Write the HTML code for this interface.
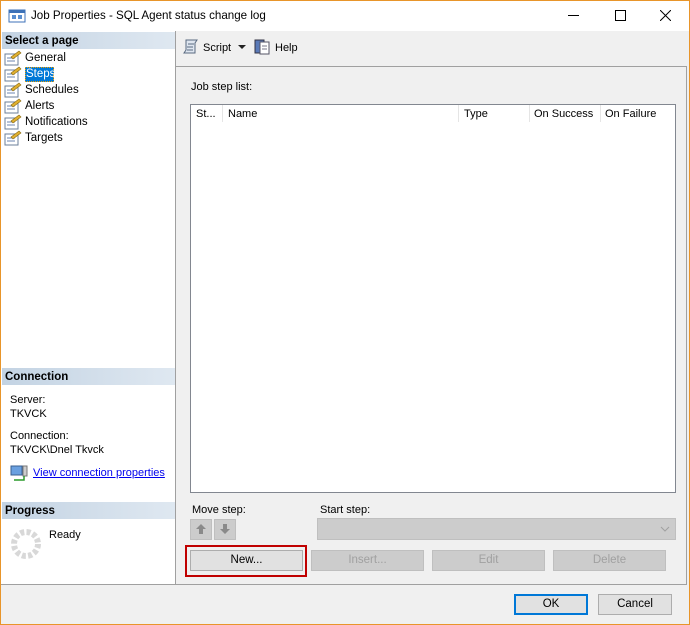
<!DOCTYPE html>
<html><head><style>
*{box-sizing:border-box;margin:0;padding:0}
body{width:690px;height:625px;overflow:hidden;font-family:"Liberation Sans",sans-serif;font-size:11px;line-height:16px;color:#000;background:#f0f0f0;position:relative}
.a{position:absolute}
.win{left:0;top:0;width:690px;height:625px;border:1px solid #e8952a}
.hdr{background:linear-gradient(to right,#c3d3e3,#dfe8f1);font-weight:bold;height:17px;padding:1px 3px;line-height:16px;font-size:11.5px}
.btn{background:#e1e1e1;border:1px solid #adadad;text-align:center;line-height:19px;height:21px;font-size:11.5px}
.dis{background:#cccccc;border:1px solid #bfbfbf;color:#a0a0a0}
.li{left:25px;font-size:11.5px}
</style></head><body>
<div class="a win"></div>
<div class="a" style="left:1px;top:1px;width:688px;height:30px;background:#fff"></div>
<svg class="a" style="left:8px;top:8px" width="18" height="16"><rect x="1" y="2" width="16" height="12" fill="#fff" stroke="#3d72b8"/><rect x="1" y="2" width="16" height="3" fill="#3d72b8"/><rect x="4" y="7" width="4" height="4" fill="#5b8fd0"/><rect x="10" y="7" width="4" height="4" fill="#5b8fd0"/></svg>
<div class="a" style="left:31px;top:8px;font-size:11.6px">Job Properties - SQL Agent status change log</div>
<div class="a" style="left:568px;top:15px;width:11px;border-top:1px solid #000"></div>
<div class="a" style="left:615px;top:10px;width:11px;height:11px;border:1px solid #000"></div>
<svg class="a" style="left:660px;top:10px" width="11" height="11"><path d="M0 0L11 11M11 0L0 11" stroke="#000" stroke-width="1"/></svg>

<div class="a" style="left:1px;top:31px;width:175px;height:554px;background:#fff;border-right:1px solid #a0a0a0;border-bottom:1px solid #a0a0a0"></div>
<div class="a hdr" style="left:2px;top:32px;width:173px">Select a page</div>
<div class="a" style="left:25px;top:67px;width:29px;height:15px;background:#0078d7;border:1px dotted #f0a000"></div>
<svg class="a" style="left:4px;top:50px" width="18" height="96">
<g id="p"><rect x="1" y="4" width="13" height="11" fill="#fff" stroke="#6b7f9a"/><path d="M3 8h8M3 11h8" stroke="#6b86b0"/><path d="M7 7l8-6 2 2-8 6z" fill="#e0b030" stroke="#8a6a10" stroke-width=".6"/></g>
<use href="#p" y="16"/><use href="#p" y="32"/><use href="#p" y="48"/><use href="#p" y="64"/><use href="#p" y="80"/></svg>
<div class="a li" style="top:50px">General</div>
<div class="a li" style="top:66px;left:26px;color:#fff">Steps</div>
<div class="a li" style="top:82px">Schedules</div>
<div class="a li" style="top:98px">Alerts</div>
<div class="a li" style="top:114px">Notifications</div>
<div class="a li" style="top:130px">Targets</div>

<div class="a hdr" style="left:2px;top:368px;width:173px">Connection</div>
<div class="a" style="left:10px;top:393px;line-height:14px">Server:<br>TKVCK</div>
<div class="a" style="left:10px;top:429px;line-height:14px">Connection:<br>TKVCK\Dnel Tkvck</div>
<svg class="a" style="left:10px;top:465px" width="18" height="16"><rect x="1" y="1" width="11" height="9" fill="#6aa0e0" stroke="#3a5f90"/><rect x="13" y="1" width="4" height="10" fill="#ccc" stroke="#777"/><path d="M4 15h10v-4" stroke="#2a9a2a" fill="none" stroke-width="1.5"/></svg>
<div class="a" style="left:33px;top:465px;color:#0000ee;text-decoration:underline">View connection properties</div>
<div class="a hdr" style="left:2px;top:502px;width:173px">Progress</div>
<svg class="a" style="left:10px;top:528px" width="32" height="32"><circle cx="16" cy="16" r="12" fill="none" stroke="#d8d8d8" stroke-width="6" stroke-dasharray="4 2.3"/></svg>
<div class="a" style="left:49px;top:527px">Ready</div>

<div class="a" style="left:176px;top:66px;width:511px;height:1px;background:#a0a0a0"></div>
<div class="a" style="left:686px;top:66px;width:1px;height:519px;background:#a0a0a0"></div>
<div class="a" style="left:176px;top:584px;width:511px;height:1px;background:#a0a0a0"></div>
<svg class="a" style="left:182px;top:38px" width="18" height="18"><path d="M4 2h11l-2 3v10H2l2-3z" fill="#dfe6f0" stroke="#5a6a80"/><path d="M6 6h6M5 9h6M5 12h6" stroke="#5a6a80"/></svg>
<div class="a" style="left:203px;top:40px">Script</div>
<div class="a" style="left:238px;top:45px;border-left:4px solid transparent;border-right:4px solid transparent;border-top:4px solid #222"></div>
<svg class="a" style="left:254px;top:38px" width="18" height="18"><rect x="1" y="2" width="9" height="13" fill="#5a7ab8" stroke="#334"/><rect x="6" y="4" width="9" height="12" fill="#fff" stroke="#556"/><path d="M8 8h5M8 11h5" stroke="#778"/></svg>
<div class="a" style="left:275px;top:40px">Help</div>

<div class="a" style="left:191px;top:79px">Job step list:</div>
<div class="a" style="left:190px;top:104px;width:486px;height:389px;background:#fff;border:1px solid #828790"></div>
<div class="a" style="left:191px;top:105px;height:17px;width:484px">
<div class="a" style="left:5px;top:1px">St...</div><div class="a" style="left:31px;top:0;height:17px;border-left:1px solid #e5e5e5"></div>
<div class="a" style="left:37px;top:1px">Name</div><div class="a" style="left:267px;top:0;height:17px;border-left:1px solid #e5e5e5"></div>
<div class="a" style="left:273px;top:1px">Type</div><div class="a" style="left:338px;top:0;height:17px;border-left:1px solid #e5e5e5"></div>
<div class="a" style="left:343px;top:1px">On Success</div><div class="a" style="left:409px;top:0;height:17px;border-left:1px solid #e5e5e5"></div>
<div class="a" style="left:414px;top:1px">On Failure</div>
</div>

<div class="a" style="left:192px;top:502px">Move step:</div>
<div class="a dis" style="left:190px;top:519px;width:22px;height:21px"></div>
<div class="a dis" style="left:214px;top:519px;width:22px;height:21px"></div>
<svg class="a" style="left:194px;top:522px" width="40" height="14"><path d="M2 7l5-5 5 5h-3v5H5V7z" fill="#8a8a8a"/><path d="M26 7l5 5 5-5h-3V2h-4v5z" fill="#8a8a8a"/></svg>
<div class="a" style="left:320px;top:502px">Start step:</div>
<div class="a dis" style="left:317px;top:518px;width:359px;height:22px"></div>
<svg class="a" style="left:660px;top:525px" width="10" height="8"><path d="M1 2l4 4 4-4" stroke="#a0a0a0" fill="none"/></svg>

<div class="a" style="left:185px;top:545px;width:122px;height:32px;border:2px solid #c00000"></div>
<div class="a btn" style="left:190px;top:550px;width:113px">New...</div>
<div class="a btn dis" style="left:311px;top:550px;width:113px">Insert...</div>
<div class="a btn dis" style="left:432px;top:550px;width:113px">Edit</div>
<div class="a btn dis" style="left:553px;top:550px;width:113px">Delete</div>

<div class="a btn" style="left:514px;top:594px;width:74px;border:2px solid #0078d7;line-height:17px">OK</div>
<div class="a btn" style="left:598px;top:594px;width:74px">Cancel</div>
</body></html>
